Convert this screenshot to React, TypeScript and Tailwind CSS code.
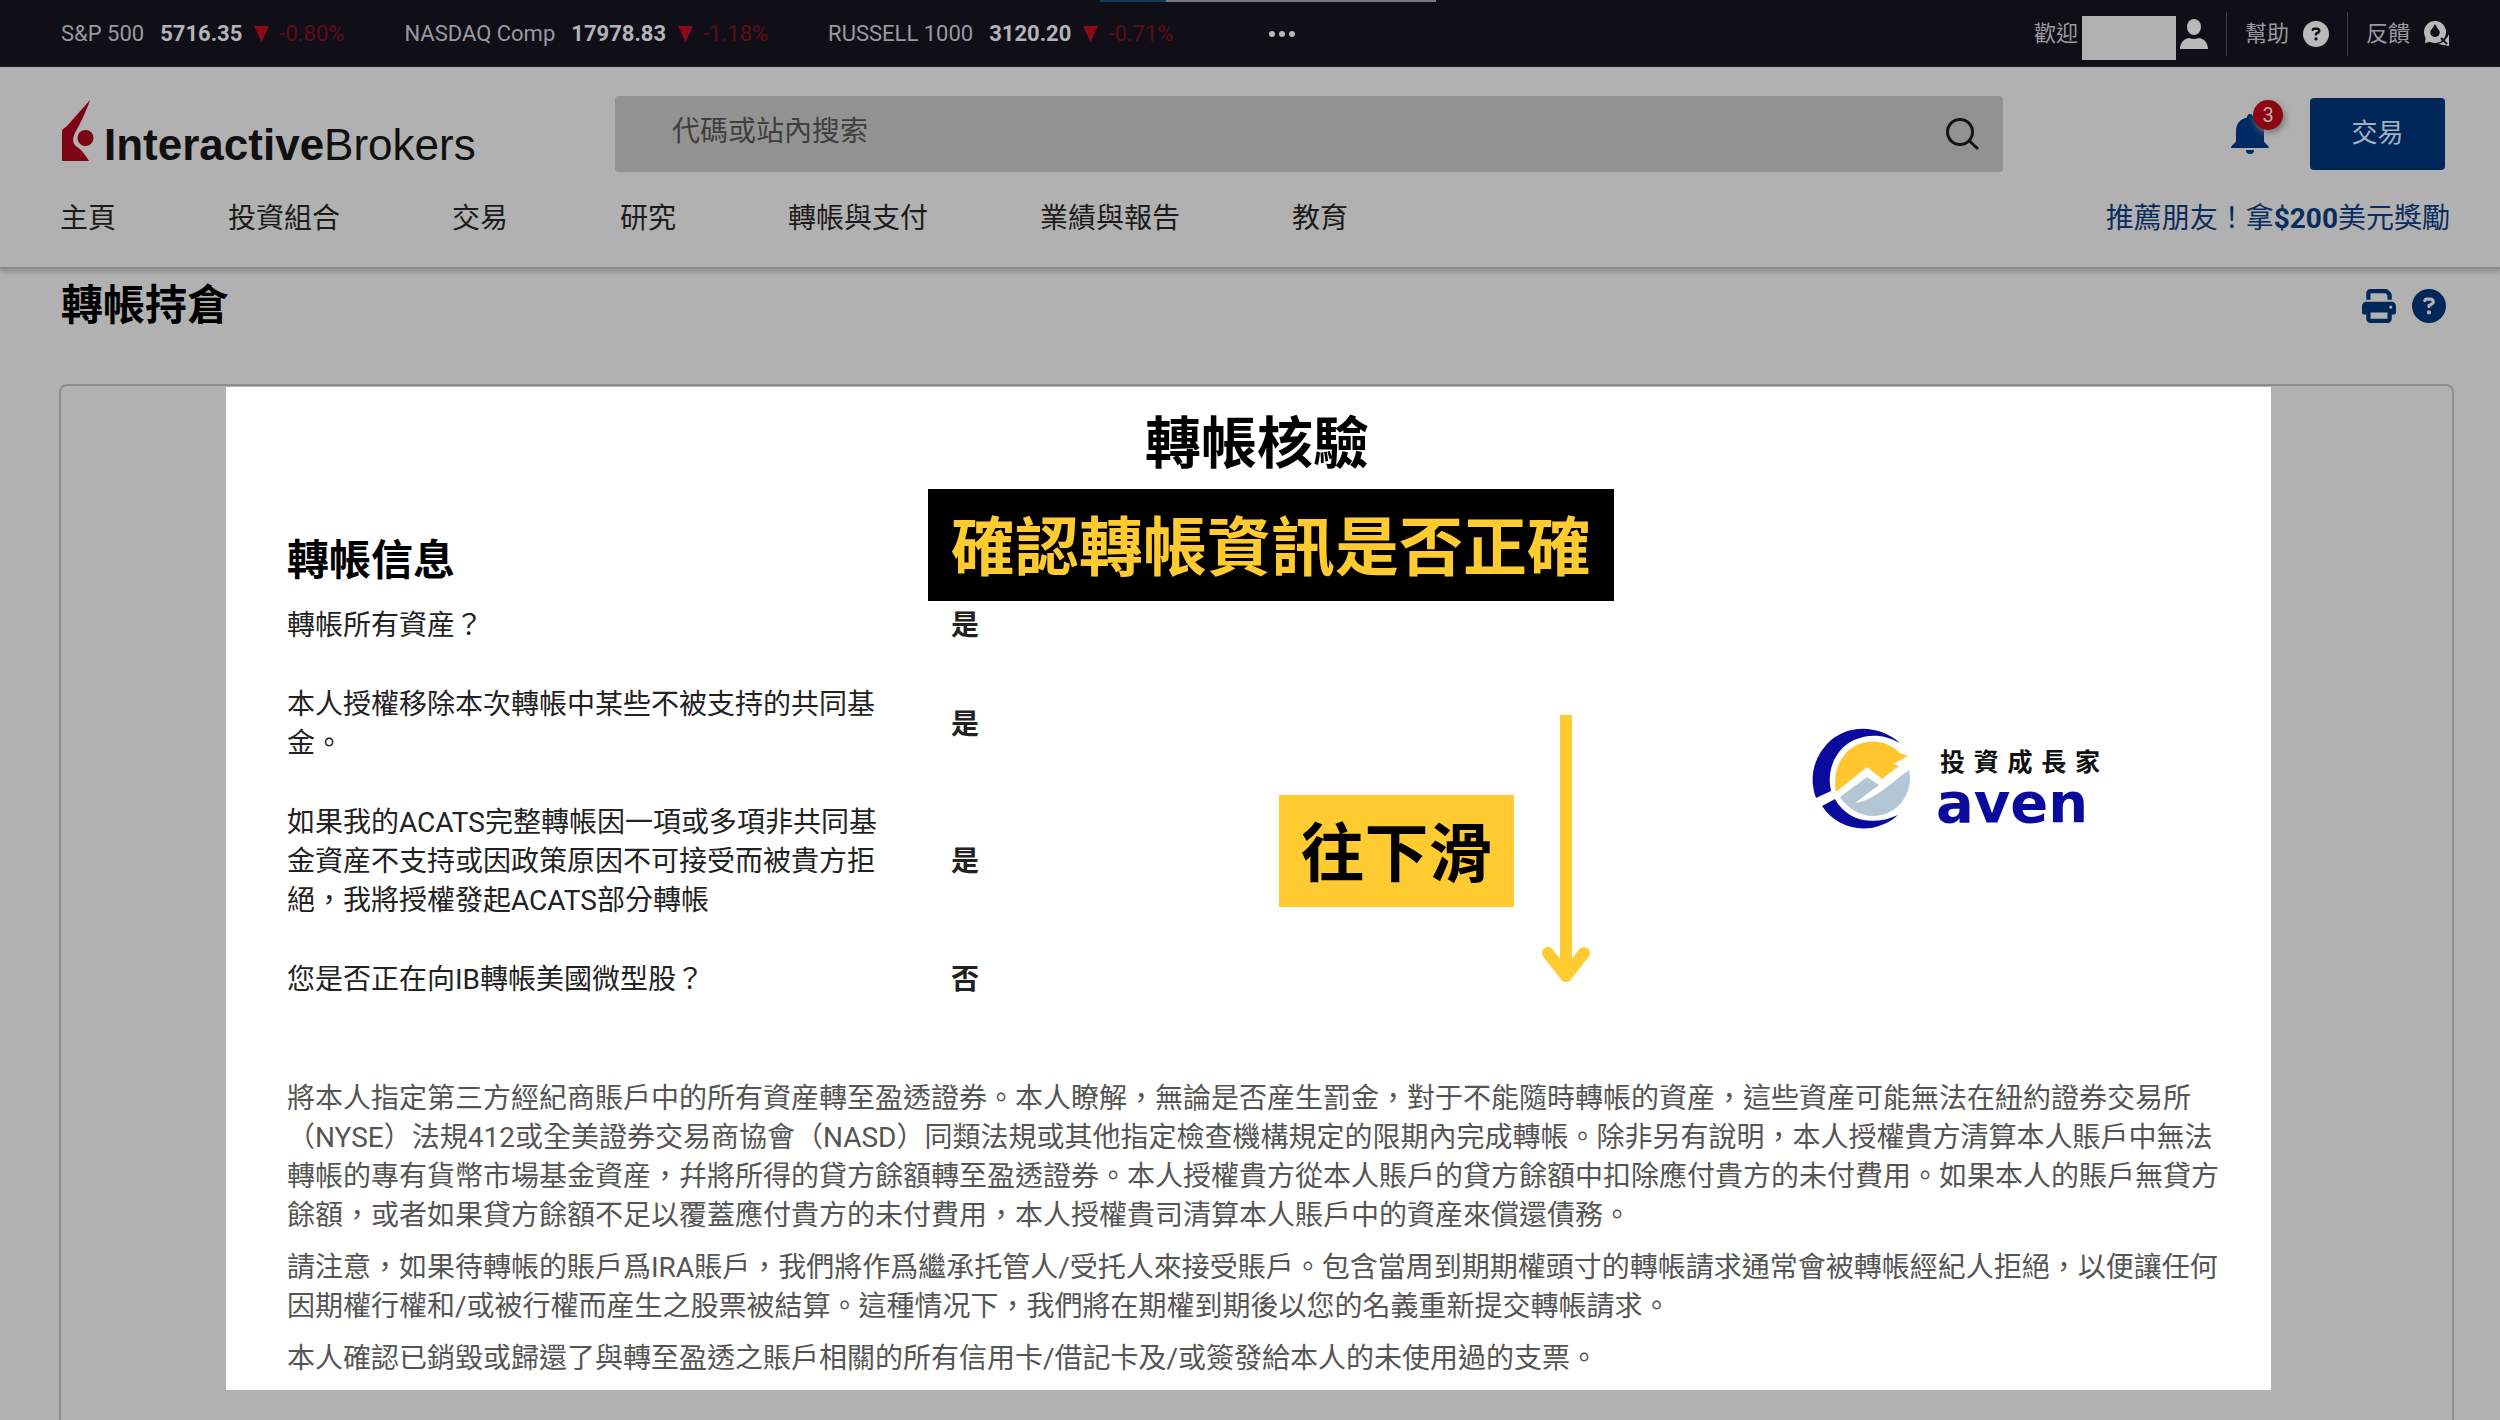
import { FaCircleQuestion, FaPrint } from 'react-icons/fa6'

const TICKERS = [
  { name: 'S&P 500', price: '5716.35', change: '-0.80%' },
  { name: 'NASDAQ Comp', price: '17978.83', change: '-1.18%' },
  { name: 'RUSSELL 1000', price: '3120.20', change: '-0.71%' },
]

const NAV_ITEMS = [
  '主頁',
  '投資組合',
  '交易',
  '研究',
  '轉帳與支付',
  '業績與報告',
  '教育',
]

const TRANSFER_INFO = [
  { question: '轉帳所有資産？', answer: '是' },
  { question: '本人授權移除本次轉帳中某些不被支持的共同基金。', answer: '是' },
  {
    question:
      '如果我的ACATS完整轉帳因一項或多項非共同基金資産不支持或因政策原因不可接受而被貴方拒絕，我將授權發起ACATS部分轉帳',
    answer: '是',
  },
  { question: '您是否正在向IB轉帳美國微型股？', answer: '否' },
]

const TERMS = [
  '將本人指定第三方經紀商賬戶中的所有資産轉至盈透證券。本人瞭解，無論是否産生罰金，對于不能隨時轉帳的資産，這些資産可能無法在紐約證券交易所（NYSE）法規412或全美證券交易商協會（NASD）同類法規或其他指定檢查機構規定的限期內完成轉帳。除非另有說明，本人授權貴方清算本人賬戶中無法轉帳的專有貨幣市場基金資産，幷將所得的貸方餘額轉至盈透證券。本人授權貴方從本人賬戶的貸方餘額中扣除應付貴方的未付費用。如果本人的賬戶無貸方餘額，或者如果貸方餘額不足以覆蓋應付貴方的未付費用，本人授權貴司清算本人賬戶中的資産來償還債務。',
  '請注意，如果待轉帳的賬戶爲IRA賬戶，我們將作爲繼承托管人/受托人來接受賬戶。包含當周到期期權頭寸的轉帳請求通常會被轉帳經紀人拒絕，以便讓任何因期權行權和/或被行權而産生之股票被結算。這種情况下，我們將在期權到期後以您的名義重新提交轉帳請求。',
  '本人確認已銷毀或歸還了與轉至盈透之賬戶相關的所有信用卡/借記卡及/或簽發給本人的未使用過的支票。',
]

const UserIcon = () => (
  <svg width="28" height="30" viewBox="0 0 28 30" fill="#b9b9b9">
    <ellipse cx="14" cy="8" rx="7" ry="8" />
    <path d="M0 30C0 23 5 19.500 9 19Q14 21 19 19C23 19.500 28 23 28 30Z" />
  </svg>
)

const FeedbackIcon = () => (
  <svg width="26" height="25" viewBox="0 0 26 25">
    <path d="M25 13V25L14 23C19 22 23 18 25 13Z" fill="#b9b9b9" />
    <circle cx="11" cy="11" r="11" fill="#b9b9b9" />
    <path d="M2 14L1 22L9 20Z" fill="#b9b9b9" />
    <path d="M11 3L14 8C17 10 16 16 11 16C6 16 5 10 8 8Z" fill="#100f18" />
    <path d="M17 17L23 23" stroke="#100f18" strokeWidth="2" />
  </svg>
)

const BellIcon = () => (
  <svg width="38" height="40" viewBox="0 0 38 40" fill="#002a63">
    <path d="M19 0C21 0 22 1.500 22 3.500C29 5 33 10 33 17V27C33 29 38 31 38 34H0C0 31 5 29 5 27V17C5 10 9 5 16 3.500C16 1.500 17 0 19 0Z" />
    <path d="M15 36H23C23 38.500 22 40 19 40C16 40 15 38.500 15 36Z" />
  </svg>
)

const SearchIcon = () => (
  <svg width="33" height="32" viewBox="0 0 33 32" fill="none" stroke="#141414" strokeWidth="3">
    <circle cx="14" cy="14" r="12.500" />
    <path d="M23 22.500L32 31" />
  </svg>
)

const BrokerLogo = () => (
  <a href="#" className="flex items-end">
    <svg width="34" height="61" viewBox="0 0 34 61" fill="#7f0413">
      <path d="M28 0C24 12 18 24 14 31C10 38 10 43 15 47C20 50 24 56 27 61H0V30L5 26Z" />
      <circle cx="23.500" cy="38" r="8" />
    </svg>
    <span className="ml-2 font-['Liberation_Sans',sans-serif] text-[44px] leading-8 text-[#101010]">
      <b>Interactive</b>Brokers
    </span>
  </a>
)

const TopBar = () => (
  <div className="flex h-[67px] items-center bg-[#100f18] pr-[50px] pl-[61px] text-[22px] text-[#9a999f]">
    <div className="flex items-center gap-15">
      {TICKERS.map(({ name, price, change }) => (
        <div key={name} className="flex items-center">
          <span>{name}</span>
          <b className="ml-4 text-[#b4b3b8]">{price}</b>
          <svg className="ml-3 h-4 w-[15px]" viewBox="0 0 15 16" fill="#8a0a16">
            <path d="M0 0H15L7.500 16Z" />
          </svg>
          <span className="ml-2.5 text-[#5f0c16]">{change}</span>
        </div>
      ))}
    </div>
    <button aria-label="更多" className="ml-24 flex gap-1">
      <i className="size-1.5 rounded-full bg-[#b9b9b9]" />
      <i className="size-1.5 rounded-full bg-[#b9b9b9]" />
      <i className="size-1.5 rounded-full bg-[#b9b9b9]" />
    </button>
    <div className="ml-auto flex items-center">
      <span>歡迎</span>
      <span className="ml-1 h-11 w-[94px] translate-y-1 bg-[#b1b1b1]" />
      <a href="#" aria-label="賬戶" className="ml-1">
        <UserIcon />
      </a>
      <a href="#" className="ml-[18px] flex h-11 items-center gap-3.5 border-l border-[#3b3a43] pl-[18px]">
        幫助
        <FaCircleQuestion size={26} color="#b9b9b9" />
      </a>
      <a href="#" className="ml-[18px] flex h-11 items-center gap-3.5 border-l border-[#3b3a43] pl-[18px]">
        反饋
        <FeedbackIcon />
      </a>
    </div>
    <div className="absolute top-0 left-[44%] flex h-0.5 w-[336px] bg-[#77777d]">
      <div className="w-[66px] bg-[#0d3c5c]" />
    </div>
  </div>
)

const Header = () => (
  <header className="border-b-2 border-[#8c8c8c] pt-[29px] pb-7 shadow-[0_3px_5px_#8f8f8f]">
    <div className="flex items-center pr-[55px] pl-[62px]">
      <div className="-mt-2 w-[553px] shrink-0">
        <BrokerLogo />
      </div>
      <label className="flex h-[76px] flex-1 items-center rounded-sm bg-[#929292] pr-6 pl-[57px]">
        <input
          type="text"
          aria-label="代碼或站內搜索"
          placeholder="代碼或站內搜索"
          className="mb-1 flex-1 text-[28px] leading-10 outline-none placeholder:text-[#3f3f3f]"
        />
        <SearchIcon />
      </label>
      <div className="flex w-[442px] shrink-0 items-center justify-end">
        <button aria-label="通知" className="relative mr-[41px]">
          <BellIcon />
          <span className="absolute -top-3.5 -right-3.5 size-[30px] rounded-full bg-[#8c0712] text-center text-xl leading-[30px] text-[#c0b0b0] shadow-[2px_3px_6px_#777]">
            3
          </span>
        </button>
        <button className="h-[72px] w-[135px] rounded bg-[#00275a] pb-0.5 text-[26px] text-[#a3afc0]">
          交易
        </button>
      </div>
    </div>
    <nav className="mt-[27px] flex gap-28 pr-[50px] pl-[60px] text-[28px] leading-10 text-[#1c1c1c]">
      {NAV_ITEMS.map((item) => (
        <a key={item} href="#">
          {item}
        </a>
      ))}
      <a href="#" className="ml-auto text-[#0a2c60]">
        推薦朋友！拿<b>$200</b>美元獎勵
      </a>
    </nav>
  </header>
)

const AvenLogo = () => (
  <div className="absolute top-[341px] left-[1586px] flex items-start">
    <svg width="100" height="101" viewBox="0 0 100 101">
      <path d="M88 15C66 -4 34 -4 15 16C1 31 -3 51 4 70L19 63C14 42 24 20 42 12C58 5 74 7 88 15Z" fill="#0a0a9c" />
      <path d="M10 78L23 71C34 92 60 99 86 87C63 108 27 104 10 78Z" fill="#0a0a9c" />
      <path d="M24 64C20 42 30 24 45 17C61 10 77 14 88 25L96 28L81 36L87 38L70 51L55 39Z" fill="#ffc62f" />
      <path d="M28 69L55 49L67 57L43 75C64 72 82 52 97 42C102 62 88 88 61 88C48 88 35 80 28 69Z" fill="#b3c6d6" />
      <path d="M24 67L55 43L70 54L95 38" fill="none" stroke="#fff" strokeWidth="4" />
    </svg>
    <div className="mt-[21px] ml-6 w-[172px]">
      <p className="pr-2 pl-1 text-[25px] leading-7 font-bold text-[#111] [text-align-last:justify]">
        投資成長家
      </p>
      <p className="font-['DejaVu_Sans',sans-serif] text-[56px] leading-[52px] font-bold text-[#0a0a9c]">
        aven
      </p>
    </div>
  </div>
)

const Annotations = () => (
  <>
    <p className="absolute top-[102px] left-[702px] w-[686px] bg-black pt-2 text-center text-[64px] leading-[104px] font-bold whitespace-nowrap text-[#ffcb30]">
      確認轉帳資訊是否正確
    </p>
    <p className="absolute top-[408px] left-[1053px] w-[235px] bg-[#ffcb30] pt-2 text-center text-[64px] leading-[104px] font-bold text-black">
      往下滑
    </p>
    <svg
      className="absolute top-[327px] left-[1316px]"
      width="48"
      height="270"
      viewBox="0 0 48 270"
      fill="none"
      stroke="#ffcb30"
      strokeWidth="12"
    >
      <path d="M24 1V258" />
      <path d="M6 239L24 262L42 239" strokeLinecap="round" strokeLinejoin="round" />
    </svg>
    <AvenLogo />
  </>
)

const TransferReview = () => (
  <section className="relative mt-px mr-[181px] ml-[165px] bg-white pt-[29px] pr-11 pb-3 pl-[61px]">
    <h2 className="text-center text-[56px] leading-[56px] font-bold text-black">轉帳核驗</h2>
    <h3 className="mt-[68px] text-[42px] leading-[42px] font-bold text-black">轉帳信息</h3>
    <table className="mt-6 text-[28px] leading-[39px] text-[#222]">
      <tbody>
        {TRANSFER_INFO.map(({ question, answer }) => (
          <tr key={question}>
            <th scope="row" className="w-[664px] pr-[70px] pb-10 text-left font-normal">
              {question}
            </th>
            <td className="pb-10 font-bold">{answer}</td>
          </tr>
        ))}
      </tbody>
    </table>
    <div className="mt-10 flex flex-col gap-[13px] text-[28px] leading-[39px] text-[#555]">
      {TERMS.map((term, i) => (
        <p key={i}>{term}</p>
      ))}
    </div>
    <Annotations />
  </section>
)

export default function App() {
  return (
    <div
      lang="zh-Hant"
      className="relative flex min-h-screen flex-col bg-[#b1b1b1] font-[Roboto,'Noto_Sans_CJK_TC',sans-serif]"
    >
      <TopBar />
      <Header />
      <main className="flex flex-1 flex-col pr-[46px] pl-[59px]">
        <div className="flex items-center justify-between pt-4 pr-2 pl-0.5">
          <h1 className="text-[42px] leading-[42px] font-bold text-black">轉帳持倉</h1>
          <div className="flex gap-4 text-[#00275a]">
            <button aria-label="列印">
              <FaPrint size={34} />
            </button>
            <button aria-label="說明">
              <FaCircleQuestion size={34} />
            </button>
          </div>
        </div>
        <div className="mt-[57px] flex-1 rounded-t-lg border-2 border-b-0 border-[#8e8e8e] pb-[30px]">
          <TransferReview />
        </div>
      </main>
    </div>
  )
}
